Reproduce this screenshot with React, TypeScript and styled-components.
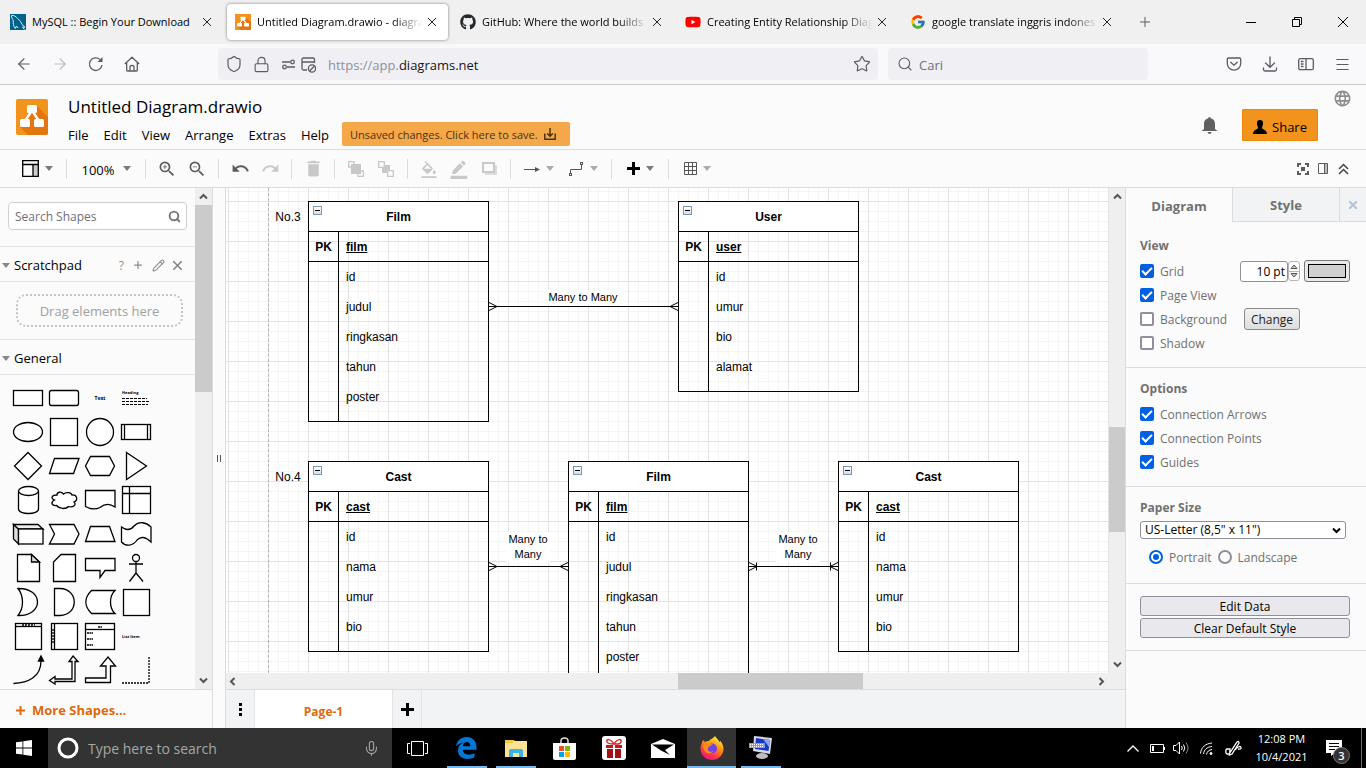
import React from 'react';
import styled, { createGlobalStyle, css } from 'styled-components';
import { FaGithub, FaYoutube } from 'react-icons/fa';
import { FcGoogle } from 'react-icons/fc';
import {
  MdZoomIn, MdZoomOut, MdUndo, MdRedo, MdDelete,
  MdFormatColorFill, MdBorderColor, MdLanguage,
} from 'react-icons/md';
import { ArrowLeft, ArrowRight, Lock, Shield, Star, Search, Menu, Plus, Pencil, Mic } from 'lucide-react';

const ui = '"Open Sans", "Noto Sans", sans-serif';
const diagramFont = '"Liberation Sans", Arial, sans-serif';
const line = '#dadce0';

const GlobalStyle = createGlobalStyle`
  * { box-sizing: border-box; }
  body { margin: 0; font-family: ${ui}; font-size: 12px; color: #000; background: #fbfbfb; }
  button, input, select { font-family: inherit; font-size: inherit; color: inherit; margin: 0; }
  button { padding: 0; border: 0; background: none; }
  svg { display: block; flex: none; }
`;

const Screen = styled.div`
  display: flex;
  flex-direction: column;
  height: 100vh;
  min-height: 480px;
  overflow: hidden;
`;

/* ---------- browser chrome ---------- */

const TabStrip = styled.div`
  display: flex;
  flex: none;
  height: 44px;
  background: #f0f0f0;
`;

const BrowserTab = styled.div<{ $active?: boolean }>`
  display: flex;
  align-items: center;
  flex: 0 1 221px;
  min-width: 0;
  height: 36px;
  margin: 4px 2px;
  padding: 0 9px 0 8px;
  gap: 6px;
  border-radius: 4px;
  ${p => p.$active && css`background: #fff; box-shadow: 0 0 3px rgba(0, 0, 0, 0.5);`}
`;

const TabTitle = styled.span<{ $fade?: boolean }>`
  flex: 1;
  min-width: 0;
  overflow: hidden;
  white-space: nowrap;
  font-size: 11px;
  line-height: 18px;
  ${p => p.$fade && css`mask-image: linear-gradient(to left, transparent, #000 30px);`}
`;

const CloseTab = styled.button`
  display: grid;
  place-items: center;
  width: 14px;
  height: 14px;
  margin-left: -4px;
`;

const StripButton = styled.button<{ $push?: boolean; $w?: number }>`
  display: grid;
  place-items: center;
  width: ${p => p.$w ?? 46}px;
  height: 44px;
  flex: none;
  ${p => p.$push && css`margin-left: auto;`}
`;

const NavBar = styled.div`
  display: flex;
  align-items: center;
  flex: none;
  height: 41px;
  padding: 0 6px;
  background: #f9f9fb;
  border-bottom: 1px solid #cccccf;
  color: #5b5b66;
`;

const NavButton = styled.button<{ $dim?: boolean }>`
  display: grid;
  place-items: center;
  flex: none;
  width: 36px;
  height: 32px;
  color: ${p => (p.$dim ? '#bcbcc2' : '#5b5b66')};
`;

const Spring = styled.div`
  flex: 0 1 68px;
`;

const UrlBar = styled.div`
  display: flex;
  align-items: center;
  flex: 1;
  min-width: 0;
  height: 32px;
  padding: 0 7px;
  border-radius: 4px;
  background: #f0f0f4;
  font-size: 13px;
`;

const UrlIcons = styled.div`
  display: flex;
  align-items: center;
  gap: 10px;
  width: 103px;
  flex: none;
`;

const Scheme = styled.label`
  padding-top: 1px;
  color: #8f8f9d;
`;

const BareInput = styled.input`
  flex: 1;
  min-width: 0;
  border: 0;
  padding: 1px 0 0;
  background: transparent;
  outline: none;
  color: #15141a;
  &::placeholder { color: #6f6f79; opacity: 1; }
`;

const SearchBar = styled.label`
  display: flex;
  align-items: center;
  flex: 0 1 260px;
  height: 32px;
  margin-left: 10px;
  padding: 0 9px;
  gap: 6px;
  border-radius: 4px;
  background: #f0f0f4;
  font-size: 13px;
`;

/* ---------- application header ---------- */

const Header = styled.header`
  display: flex;
  flex: none;
  height: 65px;
  padding-left: 16px;
  background: #fbfbfb;
  border-bottom: 1px solid ${line};
`;

const LogoBox = styled.div`
  padding-top: 14px;
  width: 52px;
  flex: none;
`;

const TitleBlock = styled.div`
  display: flex;
  flex-direction: column;
  padding-top: 10px;
  flex: 1;
`;

const FileTitle = styled.a`
  font-size: 17px;
  line-height: 24px;
  color: #000;
  text-decoration: none;
`;

const MenuRow = styled.nav`
  display: flex;
  align-items: center;
  height: 32px;
  gap: 15px;
`;

const MenuLink = styled.a`
  font-size: 13px;
  line-height: 18px;
  padding-top: 2px;
  color: #000;
  text-decoration: none;
`;

const SaveNotice = styled.button`
  display: flex;
  align-items: center;
  gap: 6px;
  width: 228px;
  height: 24px;
  margin-left: -2px;
  padding-left: 8px;
  border-radius: 2px;
  background: #f5a84a;
  color: #4a3311;
  font-size: 11px;
  white-space: nowrap;
`;

const HeaderActions = styled.div`
  display: flex;
  align-items: flex-start;
  padding-right: 14px;
`;

const ActionIcon = styled.button<{ $top: number }>`
  margin: ${p => p.$top}px 0 0;
  color: #616161;
`;

const ShareButton = styled.button`
  display: flex;
  align-items: center;
  justify-content: center;
  gap: 5px;
  width: 76px;
  height: 32px;
  margin: 24px 15px 0 24px;
  padding-top: 3px;
  border: 1px solid #f08705;
  border-radius: 1px;
  background: #f2931e;
  font-size: 13px;
`;

/* ---------- toolbar ---------- */

const Toolbar = styled.div`
  display: flex;
  align-items: center;
  flex: none;
  height: 38px;
  padding: 0 13px 0 9px;
  background: #fbfbfb;
  border-bottom: 1px solid ${line};
`;

const ToolGroup = styled.div<{ $first?: boolean }>`
  display: flex;
  align-items: center;
  height: 20px;
  padding: 0 6px;
  border-left: ${p => (p.$first ? '0' : `1px solid ${line}`)};
`;

const Tool = styled.button<{ $w?: number; $dim?: boolean }>`
  display: flex;
  align-items: center;
  justify-content: center;
  gap: 6px;
  width: ${p => p.$w ?? 30}px;
  height: 20px;
  font-size: 13px;
  color: ${p => (p.$dim ? '#c8c8c8' : '#5c5c5c')};
`;

const ZoomTool = styled(Tool)`
  gap: 8px;
  color: #000;
`;

const ZoomValue = styled.span`
  padding-top: 3px;
`;

const ViewTools = styled.div`
  display: flex;
  margin-left: auto;
`;

const Caret = styled.i<{ $color?: string }>`
  border: 4px solid transparent;
  border-bottom: 0;
  border-top: 5px solid ${p => p.$color ?? '#7b7b7b'};
`;

/* ---------- workspace ---------- */

const Workspace = styled.main`
  display: flex;
  flex: 1;
  min-height: 0;
  background: #fbfbfb;
`;

const Sidebar = styled.aside`
  display: flex;
  flex-direction: column;
  flex: none;
  width: 213px;
  border-right: 1px solid ${line};
`;

const SidebarBody = styled.div`
  display: flex;
  flex: 1;
  min-height: 0;
`;

const Palette = styled.div`
  flex: 1;
  min-width: 0;
  overflow: hidden;
`;

const ShapeSearch = styled.label`
  display: flex;
  align-items: center;
  height: 28px;
  margin: 14px 8px 16px;
  padding: 0 5px 0 6px;
  border: 1px solid #d0d0d0;
  border-radius: 4px;
  background: #fff;
  color: #757575;
`;

const SectionBar = styled.div`
  display: flex;
  align-items: center;
  height: 36px;
  padding: 2px 13px 0 2px;
  gap: 4px;
  border-top: 1px solid #e5e5e5;
  border-bottom: 1px solid #e5e5e5;
  font-size: 13px;
`;

const SectionTools = styled.div`
  display: flex;
  align-items: center;
  margin-left: auto;
  gap: 8px;
  color: #8c8c8c;
  font-size: 12px;
`;

const DropZone = styled.div`
  margin: 12px 12px 12px 16px;
  height: 33px;
  border: 2px dotted #c4c4c4;
  border-radius: 10px;
  text-align: center;
  line-height: 31px;
  font-size: 13px;
  color: #a0a0a0;
`;

const ShapeGrid = styled.div`
  display: grid;
  grid-template-columns: repeat(4, 36px);
  grid-auto-rows: 34px;
  padding: 6px 10px;
`;

const MoreShapes = styled.button`
  display: flex;
  align-items: center;
  flex: none;
  gap: 7px;
  height: 39px;
  padding: 2px 16px 0;
  border-top: 1px solid ${line};
  color: #dd6a0b;
  font-size: 13px;
  font-weight: 700;
`;

const Splitter = styled.div`
  display: grid;
  place-items: center;
  flex: none;
  width: 12px;
`;

const Track = styled.div<{ $row?: boolean; $thin?: boolean }>`
  display: flex;
  flex-direction: ${p => (p.$row ? 'row' : 'column')};
  align-items: center;
  justify-content: space-between;
  flex: none;
  overflow: hidden;
  ${p => p.$row
    ? css`height: 16px; padding: 0 2px;`
    : css`width: ${p.$thin ? 16 : 17}px; padding: 4px 0;`}
  background: #efefef;
  color: #555;
`;

const Thumb = styled.div<{ $row?: boolean; $before: string; $size: string }>`
  flex: none;
  background: #cbcbcb;
  ${p => p.$row
    ? css`width: ${p.$size}; height: 16px; margin-left: ${p.$before}; margin-right: auto;`
    : css`height: ${p.$size}; width: 17px; margin-top: ${p.$before}; margin-bottom: auto;`}
`;

const Center = styled.section`
  display: flex;
  flex-direction: column;
  flex: 1;
  min-width: 0;
  border-left: 1px solid ${line};
`;

const CanvasRow = styled.div`
  display: flex;
  flex: 1;
  min-height: 0;
`;

const Canvas = styled.div`
  position: relative;
  flex: 1;
  min-width: 0;
  overflow: hidden;
  background-color: #fff;
  background-image:
    linear-gradient(to right, #e3e3e3 1px, transparent 1px),
    linear-gradient(to bottom, #e3e3e3 1px, transparent 1px),
    linear-gradient(to right, #f5f5f5 1px, transparent 1px),
    linear-gradient(to bottom, #f5f5f5 1px, transparent 1px);
  background-size: 40px 40px, 40px 40px, 10px 10px, 10px 10px;
  background-position: 2px 13px;
  font-family: ${diagramFont};
  font-size: 12px;
`;

const PageEdge = styled.div`
  position: absolute;
  left: 42px;
  top: 0;
  bottom: 0;
  border-left: 1px dashed #b4b4b4;
`;

const Links = styled.svg`
  position: absolute;
  left: 0;
  top: 0;
  width: 100%;
  height: 100%;
`;

const Note = styled.div<{ $x: number; $y: number; $w: number }>`
  position: absolute;
  left: ${p => p.$x}px;
  top: ${p => p.$y}px;
  width: ${p => p.$w}px;
  line-height: 15px;
  text-align: center;
`;

const LinkLabel = styled(Note)`
  font-size: 11px;
  background: #fff;
`;

const EntityBox = styled.div<{ $x: number; $y: number }>`
  position: absolute;
  left: ${p => p.$x}px;
  top: ${p => p.$y}px;
  width: 181px;
  border: 1px solid #000;
`;

const EntityTitle = styled.div`
  height: 30px;
  line-height: 31px;
  background: #fff;
  border-bottom: 1px solid #000;
  text-align: center;
  font-weight: 700;
`;

const Fold = styled.button`
  position: absolute;
  left: 4px;
  top: 4px;
  width: 9px;
  height: 9px;
  border: 1px solid #7b98b5;
  background: linear-gradient(#fff, #d5dde6);
  display: grid;
  place-items: center;
  &::after { content: ''; width: 5px; height: 1px; background: #000; }
`;

const EntityRow = styled.div<{ $key?: boolean }>`
  display: grid;
  grid-template-columns: 30px 1fr;
  grid-template-rows: 100%;
  height: 30px;
  line-height: 31px;
  ${p => p.$key && css`border-bottom: 1px solid #000; font-weight: 700;`}
`;

const KeyCell = styled.span`
  border-right: 1px solid #000;
  text-align: center;
`;

const FieldCell = styled.span<{ $key?: boolean }>`
  padding-left: 7px;
  ${p => p.$key && css`text-decoration: underline;`}
`;

const EntityTail = styled(EntityRow)`
  height: 9px;
`;

const PageTabs = styled.div`
  display: flex;
  flex: none;
  height: 39px;
  border-top: 1px solid ${line};
  background: #f1f3f4;
`;

const PageCell = styled.button<{ $w: number; $active?: boolean }>`
  display: grid;
  place-items: center;
  width: ${p => p.$w}px;
  padding-top: ${p => (p.$active ? 4 : 0)}px;
  border-right: 1px solid #e2e4e7;
  background: ${p => (p.$active ? '#fff' : 'none')};
  color: ${p => (p.$active ? '#dd6a0b' : '#000')};
  font-size: 12px;
  font-weight: 700;
`;

/* ---------- format panel ---------- */

const Panel = styled.aside`
  flex: none;
  width: 241px;
  border-left: 1px solid ${line};
  overflow: hidden;
  color: #707070;
`;

const PanelTabs = styled.div`
  display: flex;
  height: 34px;
  margin-bottom: 3px;
`;

const PanelTab = styled.button<{ $active?: boolean; $w?: number }>`
  display: grid;
  place-items: center;
  ${p => (p.$w ? css`width: ${p.$w}px;` : css`flex: 1;`)}
  ${p => !p.$active && css`
    background: #f1f3f4;
    border-left: 1px solid ${line};
    border-bottom: 1px solid ${line};
  `}
  padding-top: ${p => (p.$active ? 2 : 0)}px;
  font-size: 13px;
  font-weight: 700;
`;

const Group = styled.section`
  padding: 8px 16px 12px 14px;
  border-bottom: 1px solid ${line};
`;

const GroupTitle = styled.h3`
  margin: 0;
  font-size: 12px;
  font-weight: 700;
  line-height: 26px;
`;

const Option = styled.div`
  display: flex;
  align-items: center;
  height: 24px;
`;

const OptionLabel = styled.label<{ $w?: number }>`
  display: flex;
  align-items: center;
  gap: 6px;
  flex: none;
  ${p => p.$w && css`width: ${p.$w}px;`}
`;

const Check = styled.input.attrs({ type: 'checkbox' })`
  appearance: none;
  display: grid;
  place-items: center;
  width: 14px;
  height: 14px;
  border: 2px solid #8f8f9d;
  border-radius: 2px;
  background: #fff;
  &:checked { background: #0060df; border-color: #0060df; }
  &:checked::after {
    content: '';
    width: 8px;
    height: 4px;
    border: solid #fff;
    border-width: 0 0 2px 2px;
    transform: translateY(-1px) rotate(-45deg);
  }
`;

const Radio = styled.input.attrs({ type: 'radio' })`
  appearance: none;
  display: grid;
  place-items: center;
  width: 14px;
  height: 14px;
  border: 2px solid #8f8f9d;
  border-radius: 50%;
  background: #fff;
  &:checked { border-color: #0060df; }
  &:checked::after { content: ''; width: 6px; height: 6px; border-radius: 50%; background: #0060df; }
`;

const RadioRow = styled.div`
  display: flex;
  align-items: center;
  height: 24px;
  margin: 6px 0 2px;
  padding-left: 9px;
  gap: 6px;
`;

const SizeInput = styled.input`
  width: 48px;
  height: 21px;
  padding: 0 2px;
  border: 1px solid #8f8f9d;
  border-radius: 3px;
  background: #fff;
  color: #000;
  text-align: right;
`;

const Stepper = styled.div`
  display: flex;
  flex-direction: column;
  width: 12px;
  height: 20px;
  margin-right: 4px;
  border: 1px solid #b5b5b5;
  border-radius: 3px;
`;

const Step = styled.button`
  flex: 1;
  display: grid;
  place-items: center;
  & + & { border-top: 1px solid #b5b5b5; }
`;

const ColorButton = styled.button`
  width: 46px;
  height: 22px;
  padding: 3px;
  border: 1px solid #777;
  border-radius: 3px;
  background: #e9e9ed;
`;

const Swatch = styled.span`
  display: block;
  height: 14px;
  border: 1px solid #000;
  background: #d0d0d0;
`;

const ChangeButton = styled.button`
  width: 56px;
  height: 22px;
  margin-left: 4px;
  border: 1px solid #8a8a8a;
  border-radius: 3px;
  background: linear-gradient(#f2f2f2, #dedede);
  color: #222;
`;

const SelectWrap = styled.div`
  display: grid;
  align-items: center;
  margin-right: 4px;
`;

const PaperSelect = styled.select`
  grid-area: 1 / 1;
  appearance: none;
  height: 18px;
  padding: 0 4px;
  border: 1px solid #8f8f9d;
  border-radius: 3px;
  background: #fff;
  color: #000;
  line-height: 16px;
`;

const SelectArrow = styled.span`
  grid-area: 1 / 1;
  justify-self: end;
  margin-right: 5px;
  pointer-events: none;
  color: #000;
`;

const ButtonStack = styled.section`
  display: flex;
  flex-direction: column;
  gap: 2px;
  padding: 12px 16px 12px 14px;
  border-bottom: 1px solid ${line};
`;

const WideButton = styled.button`
  height: 20px;
  border: 1px solid #8f8f9d;
  border-radius: 3px;
  background: #e9e9ed;
  color: #000;
`;

/* ---------- taskbar ---------- */

const Taskbar = styled.footer`
  display: flex;
  flex: none;
  height: 40px;
  background: #000;
  color: #fff;
`;

const TaskButton = styled.button<{ $w?: number }>`
  display: grid;
  place-items: center;
  flex: none;
  width: ${p => p.$w ?? 48}px;
  height: 40px;
`;

const TaskSearch = styled.label`
  display: flex;
  align-items: center;
  flex: 0 1 344px;
  padding: 0 12px 0 9px;
  gap: 9px;
  background: #333;
  font-size: 14px;
  color: #a6a6a6;
  input { color: #a6a6a6; }
  input::placeholder { color: #a6a6a6; }
`;

const AppButton = styled.button<{ $active?: boolean; $open?: boolean }>`
  display: flex;
  flex-direction: column;
  align-items: center;
  justify-content: center;
  flex: none;
  width: 49px;
  height: 40px;
  border-top: 2px solid transparent;
  ${p => p.$active && css`background: #333; border-top-color: #333;`}
  &::after {
    content: '';
    align-self: ${p => (p.$active ? 'stretch' : 'center')};
    width: ${p => (p.$active ? 'auto' : '40px')};
    height: 2px;
    background: ${p => (p.$open ? '#76b9ed' : 'transparent')};
  }
  svg { margin: auto; }
`;

const Tray = styled.div`
  display: flex;
  align-items: center;
  margin-left: auto;
`;

const TrayButton = styled.button<{ $w: number }>`
  display: grid;
  place-items: center;
  width: ${p => p.$w}px;
  height: 40px;
  color: #fff;
`;

const Clock = styled.time`
  width: 69px;
  text-align: center;
  font-size: 11px;
  line-height: 18px;
  white-space: nowrap;
`;

const DesktopEdge = styled.div`
  width: 5px;
  height: 40px;
  border-left: 1px solid #666;
`;

/* ---------- icons ---------- */

const Cross = ({ s = 8, w = 1, c = '#222' }: { s?: number; w?: number; c?: string }) => (
  <svg width={s} height={s} viewBox={`0 0 ${s} ${s}`} stroke={c} strokeWidth={w}>
    <path d={`M0 0L${s} ${s}M${s} 0L0 ${s}`} />
  </svg>
);

const Chevron = ({ turn = 0 }: { turn?: number }) => (
  <svg width="9" height="9" viewBox="0 0 9 9" fill="none" stroke="currentColor" strokeWidth="2">
    <path d="M1 6.5L4.5 3L8 6.5" transform={`rotate(${turn} 4.5 4.5)`} />
  </svg>
);

const DrawioMark = ({ w, h, r }: { w: number; h: number; r: number }) => (
  <svg width={w} height={h} viewBox="0 0 32 36" preserveAspectRatio="none">
    <rect width="32" height="36" rx={r} fill="#f2931e" />
    <path d="M20 6L32 18V34Q32 36 30 36H12L4 28L14 14Z" fill="#df6c0c" opacity=".75" />
    <path d="M15 13L9 22M17 13L23 22" stroke="#fff" strokeWidth="2.4" />
    <rect x="11" y="6" width="10" height="8" rx="1.5" fill="#fff" />
    <rect x="4" y="20" width="10" height="8" rx="1.5" fill="#fff" />
    <rect x="18" y="20" width="10" height="8" rx="1.5" fill="#fff" />
  </svg>
);

const MySqlMark = () => (
  <svg width="16" height="16" viewBox="0 0 16 16">
    <rect width="16" height="16" fill="#00618a" />
    <path d="M1.5 1.5C4 1 6 2.6 7.8 4.6C10 6.8 11.4 8.5 12 10.5L15 13.2L12.5 13L14.5 15.5M1.5 1.5C1 3.5 3 5 3.3 7C3 9.5 3.5 12 5.3 14.5L6.5 12L8 14" fill="none" stroke="#dfecf2" strokeWidth="1" />
  </svg>
);

/* Palette drawings, each centred on the origin of a 36 x 34 cell. */
const shapes: React.ReactNode[] = [
  <rect x="-14.5" y="-7.5" width="29" height="15" />,
  <rect x="-14.5" y="-7.5" width="29" height="15" rx="2" />,
  <text x="0" y="2" textAnchor="middle" fontSize="5" fontWeight="700" fill="#000" stroke="none">Text</text>,
  <>
    <text x="-14" y="-4" fontSize="4" fontWeight="700" fill="#000" stroke="none">Heading</text>
    <path d="M-14 .5H11M-14 3.5H13M-14 6.5H12" strokeDasharray="3 1" strokeWidth="1" />
  </>,
  <ellipse rx="14.5" ry="9.5" />,
  <rect x="-13.5" y="-13.5" width="27" height="27" />,
  <circle r="13.5" />,
  <><rect x="-14.5" y="-7.5" width="29" height="15" /><path d="M-11.5 -7.5V7.5M11.5 -7.5V7.5" /></>,
  <path d="M0 -13.5L13.5 0L0 13.5L-13.5 0Z" />,
  <path d="M-9.5 -7.5H15L9.5 7.5H-14.5Z" />,
  <path d="M-9.5 -9.5H9.5L14.5 0L9.5 9.5H-9.5L-14.5 0Z" />,
  <path d="M-9.5 -13.5L10.5 0L-9.5 13.5Z" />,
  <><path d="M-9.5 -9V9C-9.5 15 10.5 15 10.5 9V-9" /><ellipse cx=".5" cy="-9" rx="10" ry="4.5" /></>,
  <path d="M-7 -5C-12 -5 -14 -2 -9.5 0C-14 2.5 -12 6 -7.5 5.5C-5 9 2 9.5 4.5 6.5C9 8 13 4.5 10 2C14.5 0 13 -5.5 8 -5C7 -8 1.5 -8 -.5 -6C-3 -9 -7 -8 -7 -5Z" />,
  <path d="M-14.5 -9.5H15V7C8 2 3 5 0 7.5C-5 10 -10 9 -14.5 6.5Z" />,
  <><rect x="-13.5" y="-13.5" width="28" height="27" /><path d="M-6.5 -13.5V13.5M-13.5 -6.5H14.5" /></>,
  <><path d="M-14.5 -9.5L-9.5 -5V10L-14.5 5Z" fill="#ddd" /><path d="M-14.5 -9.5H10L15 -5H-9.5Z" fill="#eee" /><rect x="-9.5" y="-5" width="24.5" height="15" /></>,
  <path d="M-14.5 -9.5H10L15 0L10 10H-14.5L-9.5 0Z" />,
  <path d="M-9.5 -7.5H9.5L15 7.5H-14.5Z" />,
  <path d="M-14.5 -7C-9 -3 -5 -4 -2 -8C3 -13 10 -12 15 -7V8C10 3 5 2 1 6C-3 12 -10 13 -14.5 8Z" />,
  <><path d="M-10.5 -13.5H3.5L11.5 -6V13.5H-10.5Z" /><path d="M3.5 -13.5V-6H11.5Z" fill="#ddd" /></>,
  <path d="M-3 -13.5H11.5V13.5H-10.5V-6Z" />,
  <path d="M-14.5 -9.5H15V2.5H5L0 9.5V2.5H-14.5Z" />,
  <><circle cy="-10" r="3.5" /><path d="M0 -6.5V5M-7 -4H7M0 5L-6.5 13.5M0 5L7 13.5" /></>,
  <path d="M-10 -13.5C16 -14 16 14 -10 13.5C-4 6 -4 -6 -10 -13.5Z" />,
  <path d="M-9.5 -13.5H-4C15 -13 15 13 -4 13.5H-9.5Z" />,
  <path d="M-8.5 -11.5H15C9 -6 9 6 15 11.5H-8.5C-16 4 -16 -4 -8.5 -11.5Z" />,
  <rect x="-12.5" y="-12.5" width="26" height="26" />,
  <><rect x="-12.5" y="-12.5" width="26" height="26" /><path d="M-12.5 -9.5H13.5" /><path d="M-6 -11H7" strokeDasharray="2 1" /></>,
  <><rect x="-12.5" y="-12.5" width="26" height="26" /><path d="M-9.5 -12.5V13.5" /><path d="M-11 -7V7" strokeDasharray="2 1" /></>,
  <><rect x="-14.5" y="-12.5" width="29" height="26" /><path d="M-14.5 -6.5H14.5" /><path d="M-2 -9H2M-13 -3H-7M-13 3H-7M-13 9H-7" strokeDasharray="2 .5" strokeWidth="1.5" /></>,
  <text x="-14" y="2" fontSize="4" fontWeight="700" fill="#000" stroke="none">List Item</text>,
  <><path d="M-14.5 13.5C0 13 13 7 13 -9" fill="none" /><path d="M13 -14L10.5 -9H15.5Z" fill="#000" /></>,
  <path d="M9 -14L14 -8.5H11V11.5H-9V14L-14.5 10.5L-9 6.5V9H8V-8.5H5Z" />,
  <path d="M8 -13L15.5 -4H10.5V12.5H-14.5V8H6V-4H.5Z" />,
  <path d="M13 -13V13H-14" fill="none" strokeDasharray="2 1" />,
];

type EntityProps = { x: number; y: number; name: string; pk: string; fields: string[] };

const Entity = ({ x, y, name, pk, fields }: EntityProps) => (
  <EntityBox $x={x} $y={y}>
    <EntityTitle>{name}</EntityTitle>
    <Fold aria-label={`Collapse ${name}`} />
    <EntityRow $key><KeyCell>PK</KeyCell><FieldCell $key>{pk}</FieldCell></EntityRow>
    {fields.map(f => (
      <EntityRow key={f}><KeyCell /><FieldCell>{f}</FieldCell></EntityRow>
    ))}
    <EntityTail><KeyCell /></EntityTail>
  </EntityBox>
);

const Link = ({ x1, x2, y, bars }: { x1: number; x2: number; y: number; bars?: boolean }) => (
  <g stroke="#000" fill="none">
    <path d={`M${x1} ${y}H${x2}`} />
    <path d={`M${x1} ${y - 4}L${x1 + 8} ${y}L${x1} ${y + 4}M${x2} ${y - 4}L${x2 - 8} ${y}L${x2} ${y + 4}`} />
    {bars && <path d={`M${x1 + 7.5} ${y - 4}V${y + 4}M${x2 - 7.5} ${y - 4}V${y + 4}`} />}
  </g>
);

const browserTabs = [
  { title: 'MySQL :: Begin Your Download', icon: <MySqlMark /> },
  { title: 'Untitled Diagram.drawio - diagra', icon: <DrawioMark w={16} h={16} r={0} />, active: true, fade: true },
  { title: 'GitHub: Where the world builds', icon: <FaGithub size={16} color="#24292e" />, fade: true },
  { title: 'Creating Entity Relationship Diag', icon: <FaYoutube size={16} color="#f00" />, fade: true },
  { title: 'google translate inggris indones', icon: <FcGoogle size={16} />, fade: true },
];

export default function App() {
  return (
    <Screen>
      <GlobalStyle />
      <TabStrip>
        {browserTabs.map(t => (
          <BrowserTab key={t.title} $active={t.active}>
            {t.icon}
            <TabTitle $fade={t.fade}>{t.title}</TabTitle>
            <CloseTab aria-label="Close tab"><Cross /></CloseTab>
          </BrowserTab>
        ))}
        <StripButton $w={40} aria-label="New tab">
          <Plus size={16} strokeWidth={1.5} color="#5b5b66" />
        </StripButton>
        <StripButton $push aria-label="Minimize">
          <svg width="10" height="10"><path d="M0 5.5H10" stroke="#000" /></svg>
        </StripButton>
        <StripButton aria-label="Restore">
          <svg width="10" height="10" fill="none" stroke="#000"><path d="M.5 2.5H7.5V9.5H.5ZM2.5 2.5V.5H9.5V7.5H7.5" /></svg>
        </StripButton>
        <StripButton aria-label="Close window"><Cross s={10} c="#000" /></StripButton>
      </TabStrip>

      <NavBar>
        <NavButton aria-label="Back"><ArrowLeft size={18} strokeWidth={1.5} /></NavButton>
        <NavButton $dim aria-label="Forward"><ArrowRight size={18} strokeWidth={1.5} /></NavButton>
        <NavButton aria-label="Reload">
          <svg width="16" height="16" viewBox="0 0 16 16" fill="none" stroke="currentColor" strokeWidth="1.3">
            <path d="M14 9A6.3 6.3 0 1 1 12 3.5" /><path d="M14.5 1V6H9.5Z" fill="currentColor" stroke="none" />
          </svg>
        </NavButton>
        <NavButton aria-label="Home">
          <svg width="16" height="16" viewBox="0 0 16 16" fill="none" stroke="currentColor" strokeWidth="1.3" strokeLinejoin="round">
            <path d="M.8 8L8 1.2L15.2 8M2.7 6.5V14.2Q2.7 15 3.5 15H12.5Q13.3 15 13.3 14.2V6.5M6 15V10.5Q6 9.5 8 9.5Q10 9.5 10 10.5V15" />
          </svg>
        </NavButton>
        <Spring />
        <UrlBar>
          <UrlIcons>
            <Shield size={18} strokeWidth={1.6} />
            <Lock size={17} strokeWidth={1.6} />
            <svg width="36" height="18" viewBox="0 0 36 18" fill="none" stroke="currentColor" strokeWidth="1.3">
              <path d="M2 7H10M7 12H15" /><circle cx="12.5" cy="7" r="1.8" /><circle cx="4.5" cy="12" r="1.8" />
              <path d="M27 15H23.5Q22 15 22 13.5V4.5Q22 3 23.5 3H33Q34.5 3 34.5 4.5V8M22 7H34.5" />
              <circle cx="32" cy="13.5" r="3.6" /><path d="M29.5 16L34.5 11" />
            </svg>
          </UrlIcons>
          <Scheme htmlFor="address">https://app.</Scheme>
          <BareInput id="address" defaultValue="diagrams.net" />
          <Star size={18} strokeWidth={1.6} />
        </UrlBar>
        <SearchBar>
          <Search size={16} strokeWidth={1.6} />
          <BareInput placeholder="Cari" aria-label="Cari" />
        </SearchBar>
        <Spring />
        <NavButton aria-label="Pocket">
          <svg width="16" height="16" viewBox="0 0 16 16" fill="none" stroke="currentColor" strokeWidth="1.3" strokeLinecap="round">
            <path d="M2.5 2H13.5Q14.7 2 14.7 3.2V7.5A6.7 6.7 0 0 1 1.3 7.5V3.2Q1.3 2 2.5 2ZM4.7 6.2L8 9.2L11.3 6.2" />
          </svg>
        </NavButton>
        <NavButton aria-label="Downloads">
          <svg width="16" height="16" viewBox="0 0 16 16" fill="none" stroke="currentColor" strokeWidth="1.3" strokeLinecap="round">
            <path d="M8 1V11M3.5 7L8 11.3L12.5 7M1.5 12V13.5Q1.5 15 3 15H13Q14.5 15 14.5 13.5V12" />
          </svg>
        </NavButton>
        <NavButton aria-label="Sidebar">
          <svg width="16" height="14" viewBox="0 0 16 14" fill="none" stroke="currentColor" strokeWidth="1.3">
            <rect x=".7" y="1.7" width="14.6" height="11" rx="1.5" /><path d="M8 2V12.5M2.8 4.5H5.5M2.8 7H5.5M2.8 9.5H5.5" />
          </svg>
        </NavButton>
        <NavButton aria-label="Menu"><Menu size={17} strokeWidth={1.5} /></NavButton>
      </NavBar>

      <Header>
        <LogoBox><DrawioMark w={32} h={36} r={2} /></LogoBox>
        <TitleBlock>
          <FileTitle href="#file">Untitled Diagram.drawio</FileTitle>
          <MenuRow>
            {['File', 'Edit', 'View', 'Arrange', 'Extras', 'Help'].map(m => (
              <MenuLink key={m} href={`#${m.toLowerCase()}`}>{m}</MenuLink>
            ))}
            <SaveNotice>
              Unsaved changes. Click here to save.
              <svg width="12" height="12" viewBox="0 0 12 12" fill="none" stroke="currentColor" strokeWidth="1.5">
                <path d="M.8 5.5V11.2H11.2V5.5M6 0V8M3.2 5.5L6 8.3L8.8 5.5" />
              </svg>
            </SaveNotice>
          </MenuRow>
        </TitleBlock>
        <HeaderActions>
          <ActionIcon $top={32} aria-label="Notifications">
            <svg width="17" height="17" viewBox="0 0 17 17" fill="currentColor">
              <path d="M8.5 0Q9.5 0 9.7 1.2C13 2 14 4.5 14 7V12L16.5 14H.5L3 12V7C3 4.5 4 2 7.3 1.2Q7.5 0 8.5 0ZM6.5 15H10.5Q10 17 8.5 17Q7 17 6.5 15Z" />
            </svg>
          </ActionIcon>
          <ShareButton>
            <svg width="14" height="14" viewBox="0 0 14 14">
              <path d="M7 0C9.5 0 10.2 1.5 10 4C9.8 6 9 6.5 9 8C9 9.5 14 9.5 14 14H0C0 9.5 5 9.5 5 8C5 6.5 4.2 6 4 4C3.8 1.5 4.5 0 7 0Z" />
            </svg>
            Share
          </ShareButton>
          <ActionIcon $top={4} aria-label="Language"><MdLanguage size={19} color="#8d8d8d" /></ActionIcon>
        </HeaderActions>
      </Header>

      <Toolbar>
        <ToolGroup $first>
          <Tool $w={45} aria-label="View layout">
            <svg width="17" height="17" viewBox="0 0 17 17"><path d="M11 4H16V16H11Z" fill="#ccc" /><path d="M.7 .7H16.3V16.3H.7ZM.7 4.5H16.3M11 4.5V16" fill="none" stroke="#000" strokeWidth="1.3" /></svg>
            <Caret />
          </Tool>
        </ToolGroup>
        <ToolGroup><ZoomTool $w={66}><ZoomValue>100%</ZoomValue><Caret /></ZoomTool></ToolGroup>
        <ToolGroup>
          <Tool aria-label="Zoom in"><MdZoomIn size={20} /></Tool>
          <Tool aria-label="Zoom out"><MdZoomOut size={20} /></Tool>
        </ToolGroup>
        <ToolGroup>
          <Tool aria-label="Undo"><MdUndo size={19} /></Tool>
          <Tool $dim aria-label="Redo"><MdRedo size={19} /></Tool>
        </ToolGroup>
        <ToolGroup><Tool $dim aria-label="Delete"><MdDelete size={21} /></Tool></ToolGroup>
        <ToolGroup>
          <Tool $dim aria-label="To front">
            <svg width="16" height="16" viewBox="0 0 16 16" fill="none" stroke="currentColor" strokeWidth="1.3"><rect x="3" y="3" width="10" height="10" fill="currentColor" stroke="none" /><path d="M13 10H15.3V15.3H10V13M3 6H.7V.7H6V3" /></svg>
          </Tool>
          <Tool $dim aria-label="To back">
            <svg width="16" height="16" viewBox="0 0 16 16"><rect x="4" y="4" width="8" height="8" fill="currentColor" /><path d="M.7 .7H6.3V6.3H.7ZM9.7 9.7H15.3V15.3H9.7Z" fill="#fbfbfb" stroke="currentColor" strokeWidth="1.3" /></svg>
          </Tool>
        </ToolGroup>
        <ToolGroup>
          <Tool $dim aria-label="Fill color"><MdFormatColorFill size={18} viewBox="0 0 24 21" /></Tool>
          <Tool $dim aria-label="Line color"><MdBorderColor size={20} /></Tool>
          <Tool $dim aria-label="Shadow">
            <svg width="15" height="13" viewBox="0 0 15 13"><rect x="3" y="3" width="12" height="10" fill="#dcdcdc" /><rect x="1" y="1" width="11" height="9" fill="#fbfbfb" stroke="currentColor" strokeWidth="2" /></svg>
          </Tool>
        </ToolGroup>
        <ToolGroup>
          <Tool $w={44} aria-label="Connection">
            <svg width="16" height="8" viewBox="0 0 16 8"><path d="M0 4.5H12" stroke="#555" /><path d="M11 2L16 4.5L11 7Z" fill="#555" /></svg>
            <Caret $color="#aaa" />
          </Tool>
          <Tool $w={44} aria-label="Waypoints">
            <svg width="16" height="16" viewBox="0 0 16 16" fill="none" stroke="#555"><path d="M2.5 12V8.5H13.5V4" /><rect x="1.5" y="12.5" width="2" height="2" /><rect x="12.5" y="1.5" width="2" height="2" /></svg>
            <Caret $color="#aaa" />
          </Tool>
        </ToolGroup>
        <ToolGroup>
          <Tool $w={44} aria-label="Insert">
            <svg width="13" height="13"><path d="M6.5 0V13M0 6.5H13" stroke="#000" strokeWidth="3" /></svg>
            <Caret />
          </Tool>
        </ToolGroup>
        <ToolGroup>
          <Tool $w={44} aria-label="Table">
            <svg width="13" height="13" fill="none" stroke="#555"><path d="M.5 .5H12.5V12.5H.5ZM4.5 0V13M8.5 0V13M0 4.5H13M0 8.5H13" /></svg>
            <Caret $color="#aaa" />
          </Tool>
        </ToolGroup>
        <ViewTools>
          <Tool $w={20} aria-label="Fullscreen">
            <svg width="12" height="12" fill="none" stroke="currentColor" strokeWidth="2"><path d="M1 4V1H4M8 1H11V4M11 8V11H8M4 11H1V8" /><rect x="4" y="4" width="4" height="4" fill="currentColor" stroke="none" /></svg>
          </Tool>
          <Tool $w={20} aria-label="Format panel">
            <svg width="10" height="11" fill="none"><rect x="6" y="1" width="3" height="9" fill="#bbb" /><path d="M.5 .5H9.5V10.5H.5ZM6.5 0V11" stroke="currentColor" /></svg>
          </Tool>
          <Tool $w={20} aria-label="Collapse">
            <svg width="11" height="12" fill="none" stroke="#444" strokeWidth="1.5"><path d="M1 6L5.5 1.5L10 6M1 11L5.5 6.5L10 11" /></svg>
          </Tool>
        </ViewTools>
      </Toolbar>

      <Workspace>
        <Sidebar>
          <SidebarBody>
            <Palette>
              <ShapeSearch>
                <BareInput placeholder="Search Shapes" aria-label="Search Shapes" />
                <Search size={13} strokeWidth={3.5} />
              </ShapeSearch>
              <SectionBar>
                <Caret $color="#888" />Scratchpad
                <SectionTools>
                  <span>?</span>
                  <Plus size={12} strokeWidth={2.5} />
                  <Pencil size={13} strokeWidth={2} />
                  <Cross s={9} w={1.5} c="#808080" />
                </SectionTools>
              </SectionBar>
              <DropZone>Drag elements here</DropZone>
              <SectionBar><Caret $color="#888" />General</SectionBar>
              <ShapeGrid>
                {shapes.map((s, i) => (
                  <svg key={i} width="36" height="34" viewBox="-18 -17 36 34" fill="#fff" stroke="#000" strokeWidth="1.3">{s}</svg>
                ))}
              </ShapeGrid>
            </Palette>
            <Track>
              <Chevron />
              <Thumb $before="4px" $size="187px" />
              <Chevron turn={180} />
            </Track>
          </SidebarBody>
          <MoreShapes>
            <svg width="9" height="9"><path d="M4.5 0V9M0 4.5H9" stroke="#dd6a0b" strokeWidth="2" /></svg>
            More Shapes...
          </MoreShapes>
        </Sidebar>
        <Splitter>
          <svg width="4" height="7"><path d="M.5 0V7M3.5 0V7" stroke="#555" /></svg>
        </Splitter>

        <Center>
          <CanvasRow>
            <Canvas>
              <PageEdge />
              <Note $x={47} $y={22} $w={30}>No.3</Note>
              <Note $x={47} $y={282} $w={30}>No.4</Note>
              <Entity x={82} y={13} name="Film" pk="film" fields={['id', 'judul', 'ringkasan', 'tahun', 'poster']} />
              <Entity x={452} y={13} name="User" pk="user" fields={['id', 'umur', 'bio', 'alamat']} />
              <Entity x={82} y={273} name="Cast" pk="cast" fields={['id', 'nama', 'umur', 'bio']} />
              <Entity x={342} y={273} name="Film" pk="film" fields={['id', 'judul', 'ringkasan', 'tahun', 'poster']} />
              <Entity x={612} y={273} name="Cast" pk="cast" fields={['id', 'nama', 'umur', 'bio']} />
              <Links>
                <Link x1={263} x2={452} y={118.5} />
                <Link x1={263} x2={342} y={378.5} />
                <Link x1={523} x2={612} y={378.5} bars />
              </Links>
              <LinkLabel $x={317} $y={102} $w={80}>Many to Many</LinkLabel>
              <LinkLabel $x={280} $y={344} $w={44}>Many to Many</LinkLabel>
              <LinkLabel $x={550} $y={344} $w={44}>Many to Many</LinkLabel>
            </Canvas>
            <Track $thin>
              <Chevron />
              <Thumb $before="226px" $size="105px" />
              <Chevron turn={180} />
            </Track>
          </CanvasRow>
          <Track $row>
            <Chevron turn={270} />
            <Thumb $row $before="441px" $size="185px" />
            <Chevron turn={90} />
            <svg width="17" height="9" />
          </Track>
          <PageTabs>
            <PageCell $w={29} aria-label="Pages">
              <svg width="3" height="13"><path d="M0 0H3V3H0ZM0 5H3V8H0ZM0 10H3V13H0Z" /></svg>
            </PageCell>
            <PageCell $w={138} $active>Page-1</PageCell>
            <PageCell $w={29} aria-label="Insert page">
              <svg width="13" height="13"><path d="M6.5 0V13M0 6.5H13" stroke="#000" strokeWidth="3" /></svg>
            </PageCell>
          </PageTabs>
        </Center>

        <Panel>
          <PanelTabs>
            <PanelTab $active>Diagram</PanelTab>
            <PanelTab $w={107}>Style</PanelTab>
            <PanelTab $w={27} aria-label="Close panel"><Cross s={8} w={2} c="#b0c4d8" /></PanelTab>
          </PanelTabs>
          <Group>
            <GroupTitle>View</GroupTitle>
            <Option>
              <OptionLabel $w={100}><Check defaultChecked />Grid</OptionLabel>
              <SizeInput defaultValue="10 pt" aria-label="Grid size" />
              <Stepper>
                <Step aria-label="Increase"><svg width="8" height="5" fill="#ccc" stroke="#555"><path d="M1 4.5L4 1L7 4.5Z" /></svg></Step>
                <Step aria-label="Decrease"><svg width="8" height="5" fill="#ccc" stroke="#555"><path d="M1 .5L4 4L7 .5Z" /></svg></Step>
              </Stepper>
              <ColorButton aria-label="Grid color"><Swatch /></ColorButton>
            </Option>
            <Option><OptionLabel><Check defaultChecked />Page View</OptionLabel></Option>
            <Option>
              <OptionLabel $w={100}><Check />Background</OptionLabel>
              <ChangeButton>Change</ChangeButton>
            </Option>
            <Option><OptionLabel><Check />Shadow</OptionLabel></Option>
          </Group>
          <Group>
            <GroupTitle>Options</GroupTitle>
            {['Connection Arrows', 'Connection Points', 'Guides'].map(o => (
              <Option key={o}><OptionLabel><Check defaultChecked />{o}</OptionLabel></Option>
            ))}
          </Group>
          <Group>
            <GroupTitle>Paper Size</GroupTitle>
            <SelectWrap>
              <PaperSelect aria-label="Paper Size"><option>US-Letter (8,5" x 11")</option></PaperSelect>
              <SelectArrow><Chevron turn={180} /></SelectArrow>
            </SelectWrap>
            <RadioRow>
              <OptionLabel><Radio name="orientation" defaultChecked />Portrait</OptionLabel>
              <OptionLabel><Radio name="orientation" />Landscape</OptionLabel>
            </RadioRow>
          </Group>
          <ButtonStack>
            <WideButton>Edit Data</WideButton>
            <WideButton>Clear Default Style</WideButton>
          </ButtonStack>
        </Panel>
      </Workspace>

      <Taskbar>
        <TaskButton aria-label="Start">
          <svg width="16" height="16" fill="#fff"><path d="M0 2.3L6.5 1.4V7.6H0ZM7.3 1.3L16 0V7.6H7.3ZM0 8.4H6.5V14.6L0 13.7ZM7.3 8.4H16V16L7.3 14.7Z" /></svg>
        </TaskButton>
        <TaskSearch>
          <svg width="22" height="22" fill="none" stroke="#fff" strokeWidth="3"><circle cx="11" cy="11" r="9" /></svg>
          <BareInput placeholder="Type here to search" aria-label="Type here to search" />
          <Mic size={17} strokeWidth={1.5} />
        </TaskSearch>
        <TaskButton $w={50} aria-label="Task view">
          <svg width="21" height="15" fill="none" stroke="#fff"><path d="M4.5 .5H16.5V14.5H4.5ZM3 2.5H.5V12.5H3M18 2.5H20.5V12.5H18" /></svg>
        </TaskButton>
        <AppButton $open aria-label="Edge">
          <svg width="21" height="22" viewBox="0 0 21 22" fill="#0078d7"><path d="M0 9.5C1 3.5 5 0 10.5 0C17 0 20.5 4.5 20.5 10V12.8H6.8C7 18 14 19 18.5 16V20.3C11 24 2 21.5 2 13.5C2 9.5 4 6.8 7.5 5.5C4 6 1.5 7.5 0 9.5ZM6.9 9.2H14.3C14.3 3.5 7.3 4 6.9 9.2Z" /></svg>
        </AppButton>
        <AppButton $open aria-label="File Explorer">
          <svg width="22" height="19"><path d="M0 1H9L11 3H0Z" fill="#e8b22a" /><path d="M0 2H22V18H0Z" fill="#fde293" /><path d="M4 18V12Q4 10 6 10H16Q18 10 18 12V18H14V14H8V18Z" fill="#3ab4e8" /><path d="M0 1H8V4H0Z" fill="#f4c842" /></svg>
        </AppButton>
        <AppButton aria-label="Microsoft Store">
          <svg width="23" height="23"><path d="M8 7V4Q8 1 11.5 1Q15 1 15 4V7" stroke="#ddd" fill="none" strokeWidth="1.5" /><path d="M0 6H23V21Q23 23 21 23H2Q0 23 0 21Z" fill="#fff" /><path d="M6 9H11V14H6Z" fill="#f25022" /><path d="M12 9H17V14H12Z" fill="#7fba00" /><path d="M6 15H11V20H6Z" fill="#00a4ef" /><path d="M12 15H17V20H12Z" fill="#ffb900" /></svg>
        </AppButton>
        <AppButton aria-label="Gifts">
          <svg width="24" height="24"><rect width="24" height="24" rx="3" fill="#fff" /><path d="M12 8C8 2 4 3 5 6Q6 8 12 8C18 8 18 8 19 6C20 3 16 2 12 8Z" fill="none" stroke="#d9232e" strokeWidth="1.5" /><path d="M4 9H11V12H4ZM13 9H20V12H13Z" fill="#c4161c" /><path d="M5 13H11V22H5ZM13 13H19V22H13Z" fill="#a80f14" /></svg>
        </AppButton>
        <AppButton aria-label="Mail">
          <svg width="24" height="19"><path d="M0 5L12 0L24 5V19H0Z" fill="#fff" /><path d="M1 5.5H23L14 11L19 16L10 11.5Z" fill="#000" /></svg>
        </AppButton>
        <AppButton $open $active aria-label="Firefox">
          <svg width="24" height="24" viewBox="0 0 24 24">
            <defs><linearGradient id="fx" x1=".8" y1="0" x2=".3" y2="1"><stop offset="0" stopColor="#fff44f" /><stop offset=".4" stopColor="#ff980e" /><stop offset=".75" stopColor="#ff3647" /><stop offset="1" stopColor="#e31587" /></linearGradient></defs>
            <path d="M15 0C17 3 19 4 19.5 6L20.5 5C22.5 8 23.5 10 23.5 13A11.5 11 0 0 1 .5 13C.5 9 2 7 3 4L5 6C6 5 7 5 9 5C10 3 13 3 15 0Z" fill="url(#fx)" />
            <circle cx="12" cy="12.5" r="5" fill="#7542e5" /><path d="M3 9C7 7 10 7 13 9C10 10 9 10 8 12C7 15 10 17 14 15C9 20 3 17 3 9Z" fill="#ff8a16" />
          </svg>
        </AppButton>
        <AppButton $open aria-label="Remote keyboard">
          <svg width="24" height="24"><path d="M5 0L23 2L21 18L4 15Z" fill="#d9d9e2" /><path d="M7 2L21 4L19.5 15L6 13Z" fill="#1c35c9" /><path d="M14 3L21 4L20 11Z" fill="#8fa5f0" /><ellipse cx="13" cy="20" rx="6" ry="3" fill="#bdbdc4" /><path d="M0 7H16V12H0Z" fill="#5bb0e6" /><path d="M1 8.5H15M1 10.5H15" stroke="#fff" strokeDasharray="1 1" /></svg>
        </AppButton>

        <Tray>
          <TrayButton $w={24} aria-label="Hidden icons"><svg width="12" height="7" fill="none" stroke="currentColor" strokeWidth="1.3"><path d="M.5 6.5L6 1L11.5 6.5" /></svg></TrayButton>
          <TrayButton $w={24} aria-label="Battery"><svg width="15" height="9" fill="none" stroke="currentColor"><path d="M.5 .5H13.5V8.5H.5ZM14.5 3V6" /><path d="M3 2V7" strokeWidth="2" /></svg></TrayButton>
          <TrayButton $w={24} aria-label="Volume"><svg width="17" height="14" fill="none" stroke="currentColor"><path d="M.5 4.5H3L6.5 1V13L3 9.5H.5ZM8.5 5Q10 7 8.5 9M10.5 3.5Q13 7 10.5 10.5" /><path d="M13 1.5Q17 7 13 12.5" opacity=".5" /></svg></TrayButton>
          <TrayButton $w={27} aria-label="Wi-Fi"><svg width="13" height="13" fill="none" stroke="currentColor"><path d="M.5 11.5C1 5 6 1.5 12 1M3.5 12C4 7.5 7 5 12 4.5M6.5 12.5C7 9.5 9 8 12 7.5" /><circle cx="11" cy="11.5" r="1" fill="currentColor" /></svg></TrayButton>
          <TrayButton $w={27} aria-label="Ink"><svg width="17" height="16" fill="none" stroke="currentColor" strokeWidth="1.3"><path d="M5 9H2Q.8 9 .8 11.5Q.8 14 2.5 14H4L12 2Q14 .5 14 3L7 14L4.5 15ZM10 10C12 7 16 5 16 8Q16 9.5 13 9" /></svg></TrayButton>
          <Clock>12:08 PM<br />10/4/2021</Clock>
          <TrayButton $w={45} aria-label="Notifications">
            <svg width="25" height="31" viewBox="0 -6 25 31">
              <path d="M0 1H16V14H9L5 17V14H0Z" fill="#fff" /><path d="M3 4.5H13M3 7.5H13M3 10.5H9" stroke="#000" />
              <circle cx="15.5" cy="16.5" r="8" fill="#333" stroke="#777" />
              <text x="15.5" y="20.5" textAnchor="middle" fontSize="11" fontWeight="600" fill="#fff">3</text>
            </svg>
          </TrayButton>
          <DesktopEdge />
        </Tray>
      </Taskbar>
    </Screen>
  );
}
